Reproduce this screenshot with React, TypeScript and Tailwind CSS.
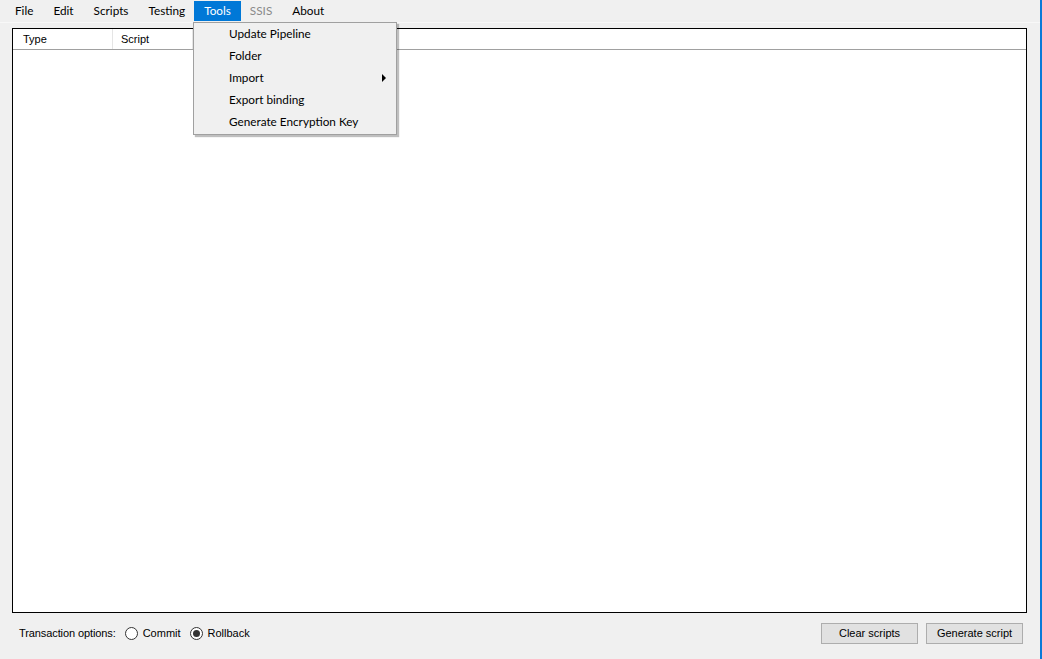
import React from "react";

const ui = { fontFamily: 'Lato, "Noto Sans", sans-serif' };
const ms = { fontFamily: '"Liberation Sans", Arial, sans-serif' };

function Radio({ checked }: { checked?: boolean }) {
  return (
    <span className="w-[13px] h-[13px] rounded-full border border-[#333] bg-white flex items-center justify-center">
      {checked && <span className="w-[7px] h-[7px] rounded-full bg-[#333]" />}
    </span>
  );
}

export default function App() {
  const menus = ["File", "Edit", "Scripts", "Testing", "Tools", "SSIS", "About"];
  const items = ["Update Pipeline", "Folder", "Import", "Export binding", "Generate Encryption Key"];
  return (
    <div className="w-[1042px] h-[659px] flex overflow-hidden relative">
      <div className="w-[1040px] h-full bg-[#f0f0f0] flex flex-col">
        <div className="h-[23px] flex items-center pl-[5px] border-b border-[#f8f8f8] text-[11.75px] text-black" style={ui}>
          {menus.map((m) => (
            <div
              key={m}
              className={
                "h-[20px] px-[10px] flex items-center " +
                (m === "Tools" ? "bg-[#0078d7] text-white ml-[-1px] mr-[-1px]" : m === "SSIS" ? "text-[#8a8a8a]" : "")
              }
            >
              {m}
            </div>
          ))}
        </div>
        <div className="mt-[5px] ml-[12px] w-[1015px] h-[585px] border border-black bg-white flex flex-col">
          <div className="h-[21px] flex border-b border-[#a0a0a0] text-[11px] text-black" style={ms}>
            <div className="w-[100px] pl-[10px] flex items-center border-r border-[#e5e5e5]">Type</div>
            <div className="w-[80px] pl-[8px] flex items-center border-r border-[#e5e5e5]">Script</div>
            <div className="flex-1" />
          </div>
        </div>
        <div className="flex-1 pt-[10px] pl-[19px] pr-[17px]">
          <div className="h-[21px] flex items-center text-[11px] text-black" style={ms}>
            <span className="tracking-[-0.1px]">Transaction options:</span>
            <span className="ml-[9px]"><Radio /></span>
            <span className="ml-[5px]">Commit</span>
            <span className="ml-[9px]"><Radio checked /></span>
            <span className="ml-[5px]">Rollback</span>
            <div className="flex-1" />
            <button className="w-[97px] h-[21px] border border-[#adadad] bg-[#e1e1e1] text-[11px]" style={ms}>Clear scripts</button>
            <button className="ml-[8px] w-[97px] h-[21px] border border-[#adadad] bg-[#e1e1e1] text-[11px]" style={ms}>Generate script</button>
          </div>
        </div>
      </div>
      <div className="w-[2px] h-full bg-[#0a7ad8]" />

      <div
        className="absolute left-[193px] top-[22px] w-[204px] h-[113px] bg-[#f0f0f0] border border-[#a0a0a0] shadow-[2px_2px_1px_rgba(0,0,0,0.25)] text-[11.75px] text-black"
        style={ui}
      >
        {items.map((it) => (
          <div key={it} className="h-[22px] flex items-center pl-[35px] relative">
            {it}
            {it === "Import" && (
              <span className="absolute right-[10px] top-[7px] w-0 h-0 border-y-[4px] border-y-transparent border-l-[4px] border-l-black" />
            )}
          </div>
        ))}
      </div>
    </div>
  );
}
